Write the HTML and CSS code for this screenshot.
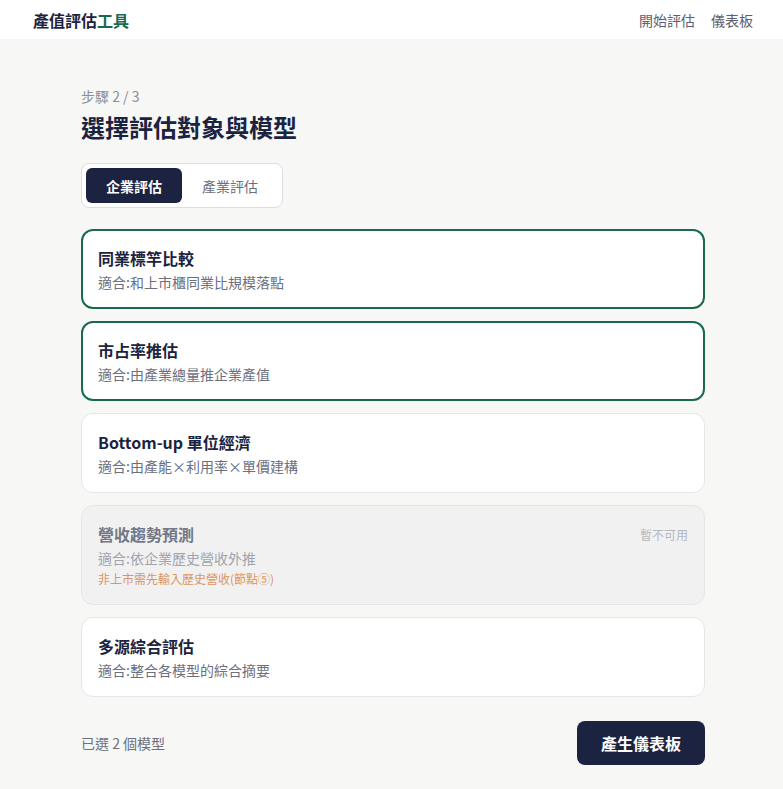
FILE: index.html
```html
<!DOCTYPE html>
<html lang="zh-Hant">
<head>
<meta charset="utf-8">
<title>產值評估工具</title>
<link rel="stylesheet" href="styles.css">
</head>
<body>
<header class="topbar">
  <div class="logo">產值評估<span class="logo-accent">工具</span></div>
  <nav class="nav">
    <a class="nav-link" href="#">開始評估</a>
    <a class="nav-link" href="#">儀表板</a>
  </nav>
</header>
<main class="main">
  <div class="container">
    <div class="step">步驟 2 / 3</div>
    <h1 class="title">選擇評估對象與模型</h1>
    <div class="tabs">
      <button class="tab tab-active">企業評估</button>
      <button class="tab">產業評估</button>
    </div>
    <div class="cards">
      <div class="card card-selected">
        <div class="card-title">同業標竿比較</div>
        <div class="card-desc">適合:和上市櫃同業比規模落點</div>
      </div>
      <div class="card card-selected">
        <div class="card-title">市占率推估</div>
        <div class="card-desc">適合:由產業總量推企業產值</div>
      </div>
      <div class="card">
        <div class="card-title">Bottom-up 單位經濟</div>
        <div class="card-desc">適合:由產能×利用率×單價建構</div>
      </div>
      <div class="card card-disabled">
        <div class="card-head">
          <div class="card-title">營收趨勢預測</div>
          <div class="card-badge">暫不可用</div>
        </div>
        <div class="card-desc">適合:依企業歷史營收外推</div>
        <div class="card-warn">非上市需先輸入歷史營收(節點⑤)</div>
      </div>
      <div class="card">
        <div class="card-title">多源綜合評估</div>
        <div class="card-desc">適合:整合各模型的綜合摘要</div>
      </div>
    </div>
    <div class="footer">
      <div class="count">已選 2 個模型</div>
      <button class="primary">產生儀表板</button>
    </div>
  </div>
</main>
</body>
</html>
```

FILE: styles.css
```css
* { box-sizing: border-box; }
html, body { margin: 0; padding: 0; }
body {
  background: #f7f7f5;
  font-family: "Noto Sans CJK TC", "Noto Sans", sans-serif;
  color: #1b2340;
  min-height: 789px;
}
.topbar {
  height: 39px;
  background: #ffffff;
  display: flex;
  align-items: center;
  justify-content: space-between;
  padding: 0 30px 0 33px;
}
.logo {
  font-size: 16px;
  font-weight: 700;
  color: #1b2340;
}
.logo-accent { color: #17694f; }
.nav { display: flex; gap: 16px; }
.nav-link {
  font-size: 14px;
  color: #5b6170;
  text-decoration: none;
}
.main { padding-top: 47px; display: flex; justify-content: center; }
.container { width: 624px; margin-left: 3px; }
.step {
  font-size: 14px;
  line-height: 21px;
  color: #8a8f99;
}
.title {
  margin: 4px 0 0;
  font-size: 24px;
  line-height: 32px;
  font-weight: 700;
  color: #1b2340;
}
.tabs {
  margin-top: 20px;
  display: inline-flex;
  padding: 4px;
  background: #ffffff;
  border: 1px solid #dcdde2;
  border-radius: 8px;
}
.tab {
  border: 0;
  background: transparent;
  font-family: inherit;
  font-size: 14px;
  height: 35px;
  width: 96px;
  padding: 0;
  border-radius: 6px;
  color: #6b7080;
  cursor: pointer;
}
.tab-active {
  background: #1b2340;
  color: #ffffff;
  font-weight: 700;
}
.cards {
  margin-top: 21px;
  display: flex;
  flex-direction: column;
  gap: 12px;
}
.card {
  background: #ffffff;
  border: 1px solid #e6e6e8;
  border-radius: 12px;
  padding: 17px 16px 16px;
}
.card-selected {
  border: 2px solid #17694f;
  padding: 16px 15px 15px;
}
.card-title {
  font-size: 16px;
  line-height: 22px;
  font-weight: 700;
  color: #1b2340;
}
.card-desc {
  margin-top: 3px;
  font-size: 14px;
  line-height: 20px;
  color: #6b7080;
}
.card-disabled { background: #f1f1f2; }
.card-disabled .card-title { color: #737885; }
.card-disabled .card-desc { color: #a0a4ad; }
.card-head { display: flex; justify-content: space-between; align-items: center; }
.card-badge { font-size: 12px; color: #b4b7bd; }
.card-warn {
  margin-top: 2px;
  font-size: 12px;
  line-height: 18px;
  color: #d99563;
}
.footer {
  margin-top: 24px;
  display: flex;
  justify-content: space-between;
  align-items: center;
}
.count { font-size: 14px; color: #6b7080; }
.primary {
  width: 128px;
  height: 44px;
  border: 0;
  border-radius: 8px;
  background: #1b2340;
  color: #ffffff;
  font-family: inherit;
  font-size: 16px;
  font-weight: 700;
  cursor: pointer;
}
```
